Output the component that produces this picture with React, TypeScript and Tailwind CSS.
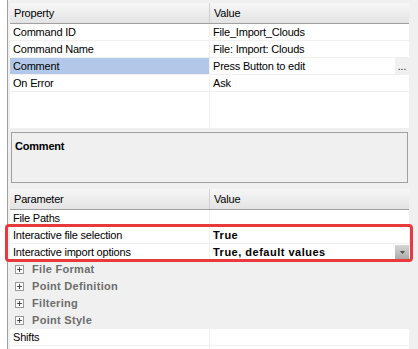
import React from "react";

const upperRows = [
  { name: "Command ID", value: "File_Import_Clouds" },
  { name: "Command Name", value: "File: Import: Clouds" },
  { name: "Comment", value: "Press Button to edit", selected: true, ellipsis: true },
  { name: "On Error", value: "Ask" },
];

const categories = ["File Format", "Point Definition", "Filtering", "Point Style"];

function HeaderRow({ left, right }: { left: string; right: string }) {
  return (
    <div className="flex h-[21px] shrink-0 border-b border-[#a0a0a0] bg-gradient-to-b from-[#f7f7f7] to-[#e3e3e3]">
      <div className="flex w-[200px] items-center border-r border-[#d0d0d0] pl-[4px]">{left}</div>
      <div className="flex flex-1 items-center pl-[4px]">{right}</div>
    </div>
  );
}

function PlusBox() {
  return (
    <svg width="9" height="9" viewBox="0 0 9 9" className="shrink-0">
      <rect x="0.5" y="0.5" width="8" height="8" fill="#fbfbfb" stroke="#9a9a9a" />
      <path d="M2 4.5h5M4.5 2v5" stroke="#4a4a4a" strokeWidth="1" />
    </svg>
  );
}

export default function App() {
  return (
    <div className="flex h-[349px] w-[418px] overflow-hidden bg-white font-['Liberation_Sans',Arial,sans-serif] text-[11px] tracking-[-0.2px] text-black">
      <div className="w-[7px] shrink-0 bg-white" />
      <div className="relative flex flex-1 flex-col border-l border-[#a0a0a0] bg-[#f0f0f0] pl-[2px] pr-[9px] pt-[3px]">
        {/* property grid */}
        <div className="flex h-[125px] shrink-0 flex-col bg-white">
          <HeaderRow left="Property" right="Value" />
          {upperRows.map((r) => (
            <div key={r.name} className="flex h-[17px] shrink-0 border-b border-[#f0f0f0]">
              <div
                className={
                  "flex w-[200px] items-center border-r border-[#f0f0f0] pl-[3px] " +
                  (r.selected ? "bg-[#b3c8e8]" : "")
                }
              >
                {r.name}
              </div>
              <div className="flex flex-1 items-center pl-[3px]">
                <span className="flex-1">{r.value}</span>
                {r.ellipsis && (
                  <span className="flex h-full w-[14px] items-end justify-center bg-[#f0f0f0] pb-[2px] text-[10px] leading-none tracking-[0px]">
                    ...
                  </span>
                )}
              </div>
            </div>
          ))}
          <div className="flex flex-1">
            <div className="w-[200px] border-r border-[#f0f0f0]" />
          </div>
        </div>

        {/* comment box */}
        <div className="mx-[1px] mt-[4px] h-[51px] shrink-0 border border-[#a0a0a0] pl-[3px] pt-[5px] font-bold">
          Comment
        </div>

        {/* parameter grid */}
        <div className="mt-[6px] flex flex-1 flex-col">
          <HeaderRow left="Parameter" right="Value" />
          <div className="flex h-[17px] shrink-0 border-b border-[#f0f0f0] bg-white">
            <div className="flex w-[200px] items-center border-r border-[#f0f0f0] pl-[3px]">File Paths</div>
            <div className="flex-1" />
          </div>
          <div className="flex h-[17px] shrink-0 border-b border-[#f0f0f0] bg-white">
            <div className="flex w-[200px] items-center border-r border-[#f0f0f0] pl-[3px]">
              Interactive file selection
            </div>
            <div className="flex flex-1 items-center pl-[3px] font-bold tracking-[0.5px]">True</div>
          </div>
          <div className="flex h-[17px] shrink-0 border-b border-[#f0f0f0] bg-white">
            <div className="flex w-[200px] items-center border-r border-[#f0f0f0] pl-[3px]">
              Interactive import options
            </div>
            <div className="flex flex-1 items-center pl-[3px]">
              <span className="flex-1 font-bold tracking-[0.5px]">True, default values</span>
              <span className="flex h-[15px] w-[14px] items-center justify-center bg-gradient-to-b from-[#d6d6d6] to-[#a8a8a8]">
                <svg width="5" height="3" viewBox="0 0 5 3">
                  <path d="M0 0h5L2.5 3z" fill="#4d4d4d" />
                </svg>
              </span>
            </div>
          </div>
          {categories.map((c) => (
            <div key={c} className="flex h-[17px] shrink-0 items-center gap-[8px] pl-[5px]">
              <PlusBox />
              <span className="font-bold tracking-[0.3px] text-[#6d6d6d]">{c}</span>
            </div>
          ))}
          <div className="flex h-[17px] shrink-0 border-b border-[#f0f0f0] bg-white">
            <div className="flex w-[200px] items-center border-r border-[#f0f0f0] pl-[3px]">Shifts</div>
            <div className="flex-1" />
          </div>
          <div className="flex h-[17px] shrink-0 bg-white">
            <div className="w-[200px] border-r border-[#f0f0f0]" />
          </div>
        </div>

        {/* highlight annotation */}
        <div className="absolute left-[-3px] top-[224px] h-[38px] w-[408px] rounded-[4px] border-[3px] border-[#e8393d]" />
      </div>
    </div>
  );
}
